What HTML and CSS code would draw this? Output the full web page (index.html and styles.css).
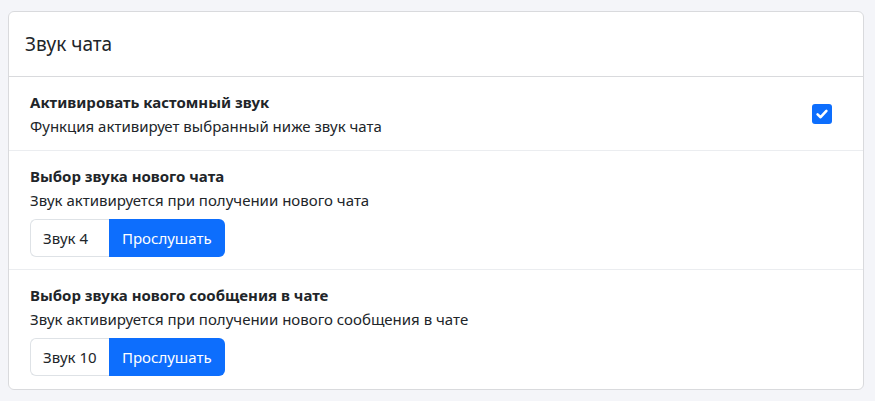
FILE: index.html
```html
<!DOCTYPE html>
<html lang="ru">
<head>
<meta charset="utf-8">
<link rel="stylesheet" href="styles.css">
</head>
<body>
<div class="card">
  <div class="card-header">Звук чата</div>
  <ul class="list">
    <li class="item item-row">
      <div>
        <div class="title">Активировать кастомный звук</div>
        <div class="desc">Функция активирует выбранный ниже звук чата</div>
      </div>
      <span class="check">
        <svg width="14" height="14" viewBox="0 0 14 14"><path d="M2.6 7.4 L5.6 10.2 L11.4 3.9" fill="none" stroke="#fff" stroke-width="2.6" stroke-linecap="round" stroke-linejoin="round"/></svg>
      </span>
    </li>
    <li class="item">
      <div class="title">Выбор звука нового чата</div>
      <div class="desc">Звук активируется при получении нового чата</div>
      <div class="group">
        <span class="sel">Звук 4</span>
        <span class="btn">Прослушать</span>
      </div>
    </li>
    <li class="item">
      <div class="title">Выбор звука нового сообщения в чате</div>
      <div class="desc">Звук активируется при получении нового сообщения в чате</div>
      <div class="group">
        <span class="sel">Звук 10</span>
        <span class="btn">Прослушать</span>
      </div>
    </li>
  </ul>
</div>
</body>
</html>
```
FILE: styles.css
```css
* { box-sizing: border-box; }
html, body { margin: 0; }
body {
  background: #f4f5f9;
  font-family: "Noto Sans", "Open Sans", sans-serif;
  font-size: 15px;
  color: #212529;
  padding: 11px 12px 0 8px;
}
.card {
  background: #fff;
  border: 1px solid #d9dadd;
  border-radius: 6px;
  width: 856px;
  height: 379px;
}
.card-header {
  height: 65px;
  padding: 0 16px;
  display: flex;
  align-items: center;
  font-size: 19px;
  border-bottom: 1px solid #d9dadd;
}
.list {
  list-style: none;
  margin: 0;
  padding: 0;
}
.item {
  padding: 13px 20px 12px 21px;
  border-bottom: 1px solid #ebedf0;
  line-height: 24px;
}
.item:last-child { border-bottom: none; }
.item-row {
  display: flex;
  justify-content: space-between;
  align-items: center;
  padding-right: 31px;
}
.title { font-weight: 700; }
.check {
  width: 20px;
  height: 20px;
  background: #0d6efd;
  border-radius: 3px;
  display: flex;
  align-items: center;
  justify-content: center;
}
.group {
  display: flex;
  margin-top: 7px;
  height: 38px;
}
.sel {
  width: 79px;
  border: 1px solid #dee2e6;
  border-right: none;
  border-radius: 6px 0 0 6px;
  padding-left: 12px;
  display: flex;
  align-items: center;
}
.btn {
  background: #0d6efd;
  color: #fff;
  border-radius: 0 6px 6px 0;
  padding: 0 13px;
  display: flex;
  align-items: center;
}
```
